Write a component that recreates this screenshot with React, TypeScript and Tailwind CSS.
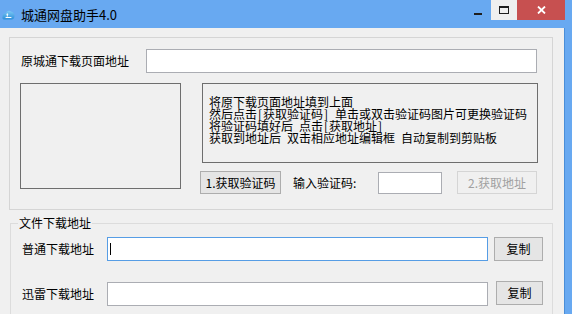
import React from 'react';

const font = { fontFamily: '"Noto Sans CJK SC", "Liberation Sans", sans-serif' };

function AppIcon() {
  return (
    <svg width="13" height="13" viewBox="0 0 13 13">
      <defs>
        <linearGradient id="cloud" x1="0" y1="0" x2="0" y2="1">
          <stop offset="0" stopColor="#7cc8f5" />
          <stop offset="1" stopColor="#2d8fd8" />
        </linearGradient>
      </defs>
      <path d="M2 11.5 C0.5 11.5 0 10 0.6 8.6 C0.4 6.5 2 5 3.6 5.4 C4.4 3 7 2.2 9 3.4 C11.6 4 13 6.5 12.4 9 C12.2 10.6 11 11.5 9.8 11.5 Z" fill="url(#cloud)" />
      <path d="M4 6.5 L5.3 5.2 L6.6 6.5 L5.8 6.5 L5.8 8.6 L4.8 8.6 L4.8 6.5 Z" fill="#fff" />
      <rect x="3.6" y="9" width="5.8" height="1" fill="#fff" />
    </svg>
  );
}

// half-width glyph cell, like the bitmap font in the reference
function Half({ children }: { children: React.ReactNode }) {
  return <span className="inline-block w-[6px] text-center">{children}</span>;
}

function WinButton({ children, className = '', disabled = false }: { children: React.ReactNode; className?: string; disabled?: boolean }) {
  return (
    <div
      className={`flex items-center justify-center border text-[12px] leading-[12px] ${
        disabled ? 'border-[#d5d5d5] bg-[#f0f0f0] text-[#a0a0a0]' : 'border-[#adadad] bg-[#e5e5e5] text-black'
      } ${className}`}
    >
      {children}
    </div>
  );
}

export default function App() {
  return (
    <div className="w-[572px] h-[314px] flex flex-col bg-[#68a9f1] overflow-hidden" style={font}>
      {/* Title bar */}
      <div className="h-[28px] flex items-start shrink-0">
        <div className="ml-[2px] mt-[8px]">
          <AppIcon />
        </div>
        <div className="ml-[6px] mt-[6px] text-[13px] leading-[18px] text-black">城通网盘助手4.0</div>
        <div className="ml-auto flex items-start mr-[7px]">
          <div className="w-[26px] h-[20px] flex items-center justify-center">
            <div className="w-[8px] h-[2px] bg-[#1e1e1e] mt-[7px] -ml-[1px]" />
          </div>
          <div className="w-[26px] h-[20px] bg-[#efefef] flex items-center justify-center">
            <div className="w-[10px] h-[8px] border border-t-2 border-[#1e1e1e]" />
          </div>
          <div className="w-[48px] h-[20px] bg-[#c75050] flex items-center justify-center">
            <svg width="9" height="8" viewBox="0 0 9 8">
              <path d="M1 0.5 L8 7.5 M8 0.5 L1 7.5" stroke="#fff" strokeWidth="1.8" />
            </svg>
          </div>
        </div>
      </div>

      <div className="flex-1 flex">
        {/* Client area */}
        <div className="w-[564px] bg-[#f0f0f0] flex flex-col">
          {/* Group 1 */}
          <div className="ml-[9px] mt-[9px] w-[544px] h-[173px] border border-[#d5d5d5] pl-[11px] pt-[11px] flex flex-col">
            <div className="flex items-center h-[24px]">
              <div className="w-[125px] text-[12px] leading-[12px] text-black">原城通下载页面地址</div>
              <div className="w-[391px] h-[24px] border border-[#abadb3] bg-white" />
            </div>
            <div className="flex mt-[10px]">
              <div className="-ml-[1px] w-[161px] h-[106px] border border-[#6e6e6e]" />
              <div className="ml-[19px] flex flex-col">
                <div className="ml-[2px] w-[336px] h-[80px] border border-[#6e6e6e] pl-[6px] pt-[12px] text-[12px] leading-[12px] text-black whitespace-nowrap">
                  <div>将原下载页面地址填到上面</div>
                  <div>
                    然后点击<Half>[</Half>获取验证码<Half>]</Half><Half> </Half>单击或双击验证码图片可更换验证码
                  </div>
                  <div>
                    将验证码填好后<Half> </Half>点击<Half>[</Half>获取地址<Half>]</Half>
                  </div>
                  <div>
                    获取到地址后<Half> </Half>双击相应地址编辑框<Half> </Half>自动复制到剪贴板
                  </div>
                </div>
                <div className="flex items-center mt-[8px]">
                  <WinButton className="w-[81px] h-[23px]">1.获取验证码</WinButton>
                  <div className="ml-[12px] w-[85px] text-[12px] leading-[12px] text-black">输入验证码:</div>
                  <div className="w-[64px] h-[22px] border border-[#abadb3] bg-white" />
                  <WinButton disabled className="ml-[15px] w-[80px] h-[23px]">2.获取地址</WinButton>
                </div>
              </div>
            </div>
          </div>

          {/* Group 2 */}
          <fieldset className="ml-[10px] mt-[7px] w-[543px] h-[110px] border border-[#dcdcdc]">
            <legend className="ml-[7px] px-[1px] text-[12px] leading-[12px] text-black">文件下载地址</legend>
            <div className="flex items-center mt-[8px] h-[24px]">
              <div className="w-[96px] pr-[13px] text-right text-[12px] leading-[12px] text-black">普通下载地址</div>
              <div className="w-[381px] h-[24px] border border-[#569de5] bg-white flex items-center">
                <div className="ml-[2px] w-[1px] h-[12px] bg-black" />
              </div>
              <WinButton className="ml-[6px] w-[49px] h-[24px]">复制</WinButton>
            </div>
            <div className="flex items-center mt-[21px] h-[24px]">
              <div className="w-[96px] pr-[13px] text-right text-[12px] leading-[12px] text-black">迅雷下载地址</div>
              <div className="w-[381px] h-[24px] border border-[#abadb3] bg-white" />
              <WinButton className="ml-[8px] w-[47px] h-[24px] -mt-[2px]">复制</WinButton>
            </div>
          </fieldset>
        </div>
        {/* Right frame */}
        <div className="flex-1 border-l border-[#4a8ed8]" />
      </div>
    </div>
  );
}
